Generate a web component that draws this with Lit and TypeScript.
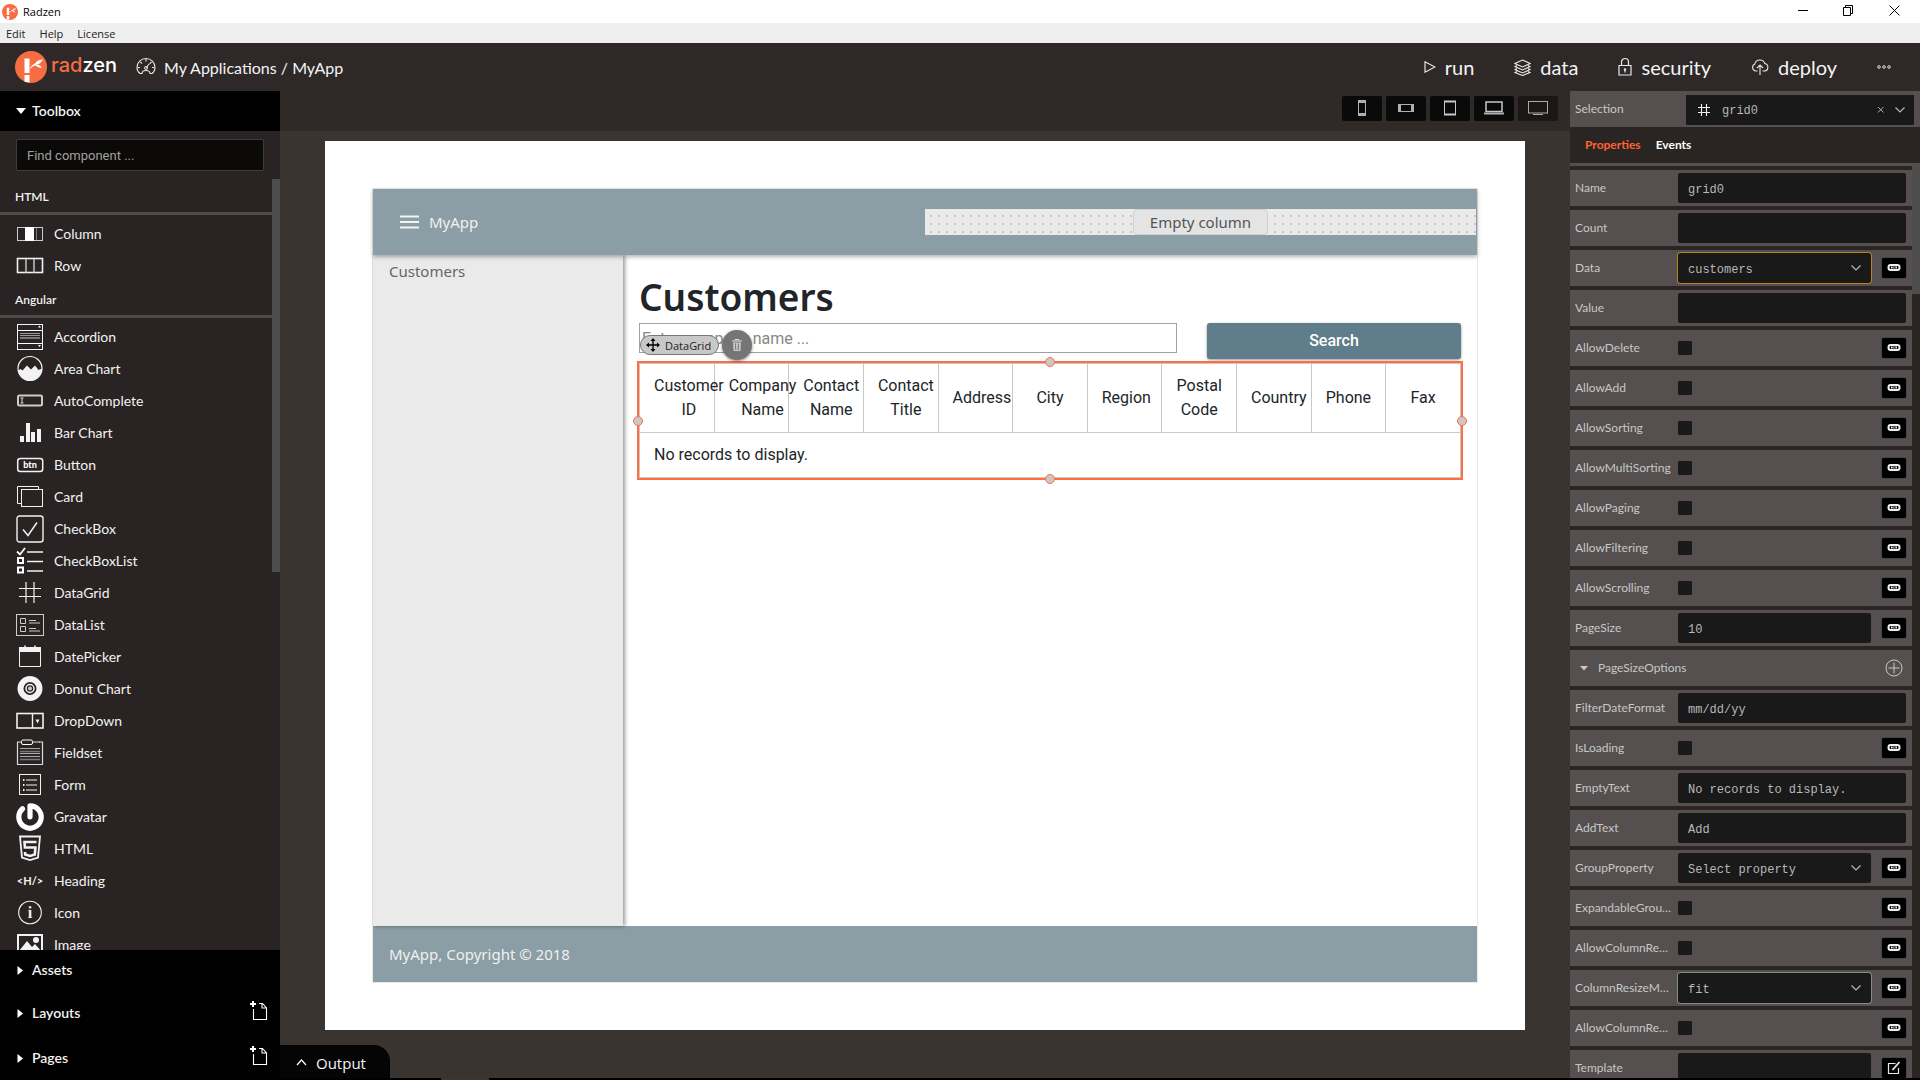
import { LitElement, html, svg, css, nothing } from "lit";
import { customElement, property } from "lit/decorators.js";

const icon = (size: number, body: unknown, cls = "") => html`
  <svg class=${cls} width=${size} height=${size} viewBox="0 0 ${size} ${size}" fill="none" aria-hidden="true">${body}</svg>
`;

const chevronDown = html`
  <svg class="chevron" width="12" height="8" viewBox="0 0 12 8" fill="none" aria-hidden="true">
    <path d="M1.5 1.5 6 6 10.5 1.5" stroke="#b8b8b8" stroke-width="1.2" />
  </svg>
`;

const linkIcon = html`
  <svg width="14" height="10" viewBox="0 0 14 10" fill="none" stroke="#f2f2f2" aria-hidden="true">
    <rect x="1.500" y="2" width="11" height="5" rx="2.200" stroke-width="2" />
    <path d="M4.800 3.500v2M9.200 3.500v2" stroke-width="1.600" />
    <path d="M7 3v3.500" stroke="#bbb" stroke-width="1" />
  </svg>
`;

const W = "#f2f2f2";

const toolIcons: Record<string, unknown> = {
  Column: svg`<rect x="1.5" y="7.5" width="25" height="13" stroke="#ccc"/><rect x="9" y="7" width="9" height="14" fill="#fff"/><path d="M20.5 8v12" stroke="#777"/>`,
  Row: svg`<rect x="1.5" y="6.5" width="25" height="14" stroke=${W} stroke-width="1.6"/><path d="M10 7v14M18 7v14" stroke="#ccc" stroke-width="1.4"/>`,
  Accordion: svg`<rect x="1.5" y="1.5" width="25" height="25" stroke=${W}/><path d="M1 7.5h26M1 20.5h26" stroke="#fff"/><path d="M4 10.5h20M4 12.5h20" stroke="#999"/><path d="M4 15h20" stroke="#777" stroke-width="2"/><path d="M22 4.5h3l-1.5-2zM22 22h3l-1.5 2z" fill="#fff"/>`,
  "Area Chart": svg`<circle cx="14" cy="13.5" r="12" stroke=${W} stroke-width="1.2"/><path d="M2 15.5 4.5 14l2 1.5L11 10.500l4 4L19 10.500l3.500 4.500L26 13.500A12 12 0 0 1 14 25.500 12 12 0 0 1 2 15.500z" fill=${W}/>`,
  AutoComplete: svg`<rect x="2" y="8.500" width="24" height="10" rx="1.500" stroke="#ccc" stroke-width="2"/><path d="M4.500 11h3M4.500 16h3M6 11v5" stroke="#ddd"/>`,
  "Bar Chart": svg`<path d="M4 17h4v6H4zM10 4h4v19h-4zM15 13h4v10h-4zM21 10h4v13h-4z" fill=${W}/>`,
  Button: svg`<rect x="1.700" y="7.500" width="25" height="13" rx="2.500" stroke=${W} stroke-width="1.500"/><text x="14" y="17" text-anchor="middle" font-family="Lato, sans-serif" font-weight="900" font-size="9" fill="#fff">btn</text>`,
  Card: svg`<path d="M5.500 20.500h-4v-17h21v3" stroke=${W}/><rect x="5.500" y="6.500" width="21" height="17" stroke=${W}/>`,
  CheckBox: svg`<rect x="1" y="1" width="26" height="26" rx="2.500" stroke=${W} stroke-width="1.400"/><path d="m7 14.500 5 6 9-13" stroke=${W} stroke-width="1.500"/>`,
  CheckBoxList: svg`<path d="m1 4.500 3 3L9 1" stroke="#fff" stroke-width="1.800"/><rect x="2" y="11" width="5" height="5" stroke="#fff" stroke-width="2"/><rect x="2" y="20.500" width="5" height="5" stroke="#fff" stroke-width="2"/><path d="M11 5h16M11 14.500h16M11 24h16" stroke=${W} stroke-width="1.600"/>`,
  DataGrid: svg`<path d="M10 3v21M18 3v21M3 9.500h22M3 17.500h22" stroke=${W} stroke-width="1.200"/>`,
  DataList: svg`<rect x=".5" y="3.500" width="27" height="21" stroke="#ccc"/><path d="M4.500 7.500h5v5h-5zM4.500 15.500h5v5h-5zM13 9.500h7M13 12h11M13 17.500h7M13 20h11" stroke="#ccc"/>`,
  DatePicker: svg`<path d="M3.500 5h21v18.500h-21z" stroke=${W}/><path d="M3 4h22v5H3z" fill=${W}/><path d="M9 2.500v3M19 2.500v3" stroke=${W} stroke-width="1.500"/>`,
  "Donut Chart": svg`<circle cx="14" cy="13.500" r="9.500" stroke=${W} stroke-width="6"/><circle cx="14" cy="13.500" r="4" stroke=${W} stroke-width="1.500"/><circle cx="14" cy="13.500" r="2" fill="#ccc"/>`,
  DropDown: svg`<rect x="1" y="6.500" width="26" height="14.500" stroke=${W} stroke-width="1.600"/><path d="M16.500 7v14" stroke=${W} stroke-width="1.400"/><path d="M19.500 12.500h4l-2 4z" fill=${W}/>`,
  Fieldset: svg`<path d="M5 3H1.500v22.500h25V3H23" stroke="#ddd" stroke-width="1.200"/><path d="M17 3h7" stroke="#ddd"/><rect x="5.500" y="1" width="11" height="4.500" rx="1.500" stroke="#fff"/><path d="M4 9.500h20M4 14.500h20M4 17.500h20" stroke="#aaa"/><path d="M4 12.500h20M4 20.500h20" stroke="#777" stroke-width="1.600"/>`,
  Form: svg`<rect x="3.500" y="3.500" width="21" height="20" stroke=${W}/><path d="M10 9h11M10 14h11M10 19h11" stroke=${W} stroke-width="1.200"/><path d="M7 9h1.500M7 14h1.500M7 19h1.500" stroke=${W} stroke-width="1.800"/>`,
  Gravatar: svg`<path d="M14 2.800v11M14 2.800A11.200 11.200 0 1 1 6.500 5.700" stroke="#fff" stroke-width="5.200" stroke-linecap="round" stroke-linejoin="round"/>`,
  HTML: svg`<path d="m4 1.500 2 21 8 2.500 8-2.500 2-21z" stroke=${W} stroke-width="1.800"/><path d="M20.500 7H8.500l.4 5.500h10.500l-.6 7-4.800 1.500-4.800-1.500-.2-2.500" stroke=${W} stroke-width="2.600"/>`,
  Heading: svg`<text x="14" y="18" text-anchor="middle" font-family="Lato, sans-serif" font-weight="700" font-size="11" fill=${W}>&lt;H/&gt;</text>`,
  Icon: svg`<circle cx="14" cy="13.500" r="11.300" stroke=${W} stroke-width="1.100"/><text x="14" y="19" text-anchor="middle" font-family="Liberation Serif, serif" font-weight="700" font-size="16" fill=${W}>i</text>`,
  Image: svg`<rect x="2" y="4" width="24" height="20" stroke=${W} stroke-width="2"/><circle cx="20" cy="9" r="3" fill=${W}/><path d="m3 20 8-10 5 6 3-3 7 8v3H3z" fill=${W}/>`,
};

const angularTools = [
  "Accordion", "Area Chart", "AutoComplete", "Bar Chart", "Button", "Card", "CheckBox", "CheckBoxList",
  "DataGrid", "DataList", "DatePicker", "Donut Chart", "DropDown", "Fieldset", "Form", "Gravatar",
  "HTML", "Heading", "Icon", "Image",
];

@customElement("toolbox-panel")
export class ToolboxPanel extends LitElement {
  static styles = css`
    :host { display: flex; flex-direction: column; min-height: 0; background: #292323; color: #f2f2f2; font-family: Lato, sans-serif; }
    * { box-sizing: border-box; }
    button { font: inherit; color: inherit; background: none; border: 0; padding: 0; text-align: left; cursor: pointer; }
    .head { display: flex; align-items: center; flex: none; height: 40px; padding: 0 16px; background: #000; font-size: 14px; font-weight: 600; }
    .head.tall { height: 45px; padding-right: 10px; }
    .fold { display: flex; align-items: center; gap: 6px; flex: 1; }
    .fold span, .tool span { padding-bottom: 2px; }
    .tall .fold span { padding-bottom: 0; }
    .search { flex: none; padding: 8px 16px; }
    .search input { display: block; width: 100%; height: 32px; padding: 0 10px; background: #0b0a09; border: 1px solid #3d3b3b; border-radius: 2px; color: #ddd; font-family: Roboto, sans-serif; font-size: 13px; }
    .search input::placeholder { color: #a0a0a0; }
    .scroll { display: flex; flex: 1; min-height: 0; }
    .list { flex: 1; overflow: hidden; }
    .track { flex: none; width: 8px; }
    .thumb { height: 51%; background: #4d4d4d; }
    .group { height: 36px; margin: 0 0 3px; padding: 0 15px; border-bottom: 3px solid #4f4b4a; font-size: 12px; font-weight: 600; line-height: 36px; }
    .tool { display: flex; align-items: center; gap: 10px; width: 100%; height: 32px; padding: 0 16px; font-size: 14px; }
  `;

  private tool(name: string) {
    return html`<button class="tool">${icon(28, toolIcons[name])}<span>${name}</span></button>`;
  }

  private section(name: string, tall: boolean) {
    return html`
      <div class="head ${tall ? "tall" : ""}">
        <button class="fold">
          ${icon(10, svg`<path d="M1.500 1v9l5.500-4.500z" fill="#fff"/>`)}<span>${name}</span>
        </button>
        ${tall
          ? html`<button aria-label="Add to ${name}">${icon(20, svg`
              <path d="M0 3h6M3 0v6" stroke="#fff" stroke-width="2"/>
              <path d="M3.500 8v10.500h13V7l-4-4.500H9M12 2.500V7h4.500" stroke="#fff" stroke-width="1.100"/>`)}</button>`
          : nothing}
      </div>
    `;
  }

  render() {
    return html`
      <div class="head">
        <button class="fold">${icon(10, svg`<path d="M0 2h10L5 8z" fill="#fff"/>`)}<span>Toolbox</span></button>
      </div>
      <div class="search"><input type="text" placeholder="Find component ..." aria-label="Find component" /></div>
      <div class="scroll">
        <div class="list">
          <h3 class="group">HTML</h3>
          ${this.tool("Column")}${this.tool("Row")}
          <h3 class="group">Angular</h3>
          ${angularTools.map((t) => this.tool(t))}
        </div>
        <div class="track"><div class="thumb"></div></div>
      </div>
      ${this.section("Assets", false)}${this.section("Layouts", true)}${this.section("Pages", true)}
    `;
  }
}

const columns = [
  "Customer ID", "Company Name", "Contact Name", "Contact Title", "Address", "City",
  "Region", "Postal Code", "Country", "Phone", "Fax",
];

@customElement("design-canvas")
export class DesignCanvas extends LitElement {
  static styles = css`
    :host { display: flex; flex-direction: column; min-width: 0; background: #3a3431; }
    * { box-sizing: border-box; }
    button { font: inherit; color: inherit; border: 0; padding: 0; cursor: pointer; }
    .devices { display: flex; justify-content: flex-end; align-items: center; gap: 4px; flex: none; height: 40px; padding: 0 12px 6px; background: #2f2a27; }
    .device { display: flex; align-items: center; justify-content: center; width: 40px; height: 25px; background: #0b0a0a; border-radius: 2px; }
    .device.on { background: #1b1716; }
    .page { flex: 1; display: flex; min-height: 0; margin: 10px 45px 15px; padding: 47px 47px; background: #fff; }
    .frame { flex: 1; display: flex; flex-direction: column; min-width: 0; border: 1px solid #e9e9e9; font-family: "Noto Sans", sans-serif; font-size: 15px; }
    .top { z-index: 1; display: flex; align-items: center; flex: none; height: 66px; background: #8b9da5; color: #f0f0f0; box-shadow: 0 2px 4px rgba(0, 0, 0, 0.3); }
    .brand { display: flex; align-items: center; gap: 10px; flex: 1; padding: 0 27px; background: none; text-align: left; }
    .empty { display: flex; justify-content: center; flex: 0 0 50%; height: 26px; border-right: 1px solid #8b9da5; background: radial-gradient(circle, #c8c8c8 1px, transparent 1px) 2px 3px / 8px 8px #eaeaea; color: #555; }
    .empty span { width: 135px; background: #e4e4e4; border: 1px solid #d0d0d0; border-radius: 4px; line-height: 24px; text-align: center; }
    .middle { flex: 1; display: flex; min-height: 0; }
    .side { z-index: 0; width: 250px; flex: none; padding: 6px 16px; background: #eaeaea; box-shadow: 2px 0 4px rgba(0, 0, 0, 0.4); line-height: 20px; }
    .side a { color: #666; text-decoration: none; }
    .main { flex: 1; min-width: 0; padding: 16px 16px 0; font-family: Roboto, sans-serif; }
    h1 { margin: 0; color: #212529; font-family: "Noto Sans", sans-serif; font-size: 37px; font-weight: 600; line-height: 52px; }
    .row { display: flex; align-items: flex-start; gap: 30px; }
    .row input { flex: 1; min-width: 0; height: 30px; padding: 0 2px; border: 1px solid #a0a0a0; color: #333; font-family: Roboto, sans-serif; font-size: 16px; }
    .row input::placeholder { color: #888; opacity: 1; }
    .search { width: 254px; height: 36px; padding-bottom: 2px; background: #607d8b; border-radius: 3px; box-shadow: 0 1px 3px rgba(0, 0, 0, 0.4); color: #fff; font-family: Roboto, sans-serif; font-size: 16px; font-weight: 500; }
    .picked { position: relative; margin: 2px -2px 0 -2px; border: 2px solid #ff6d41; }
    table { width: 100%; table-layout: fixed; border-collapse: collapse; color: #212529; font-size: 16px; line-height: 24px; }
    th, td { border: 1px solid #c8c8c8; }
    th { height: 69px; padding: 0 14px; font-weight: 400; text-align: center; white-space: normal; }
    th span { display: inline-block; vertical-align: middle; }
    td { height: 45px; padding: 0 14px; }
    .handle { position: absolute; width: 10px; height: 10px; background: #c8c8c8; border: 1px solid #ff6d41; border-radius: 50%; }
    .north { left: calc(50% - 5px); top: -6px; }
    .south { left: calc(50% - 5px); bottom: -6px; }
    .west { left: -6px; top: calc(50% - 5px); }
    .east { right: -6px; top: calc(50% - 5px); }
    .tags { position: absolute; left: 1px; bottom: 100%; display: flex; align-items: center; gap: 3px; margin-bottom: 3px; }
    .tag { display: flex; align-items: center; gap: 5px; height: 20px; padding: 0 7px 0 5px; background: #c8c8c8; border: 1px solid #777; border-radius: 10px; color: #222; font-family: "Open Sans", sans-serif; font-size: 11px; }
    .trash { display: flex; align-items: center; justify-content: center; width: 30px; height: 30px; background: #757575; border-radius: 50%; box-shadow: 0 1px 3px rgba(0, 0, 0, 0.5); }
    .bottom { flex: none; height: 56px; padding: 0 16px; background: #8b9da5; color: #f0f0f0; line-height: 56px; }
    .foot { display: flex; flex: none; height: 35px; background: linear-gradient(90deg, #000 161px, #3a3638 161px 209px, #000 209px) bottom / 100% 2px no-repeat; }
    .output { display: flex; align-items: center; gap: 9px; height: 33px; padding: 2px 24px 0 16px; background: #050505; border-radius: 0 16px 0 0; color: #f5f5f5; font-family: "Open Sans", sans-serif; font-size: 15px; }
  `;

  private device(label: string, body: unknown, on = false) {
    return html`<button class="device ${on ? "on" : ""}" aria-label=${label}>${icon(24, body)}</button>`;
  }

  render() {
    return html`
      <div class="devices">
        ${this.device("Phone", svg`<rect x="8.500" y="4.500" width="7" height="15" stroke="#b0b0b0"/><path d="M8 6h8M8 18h8" stroke="#b0b0b0" stroke-width="2"/>`)}
        ${this.device("Phone landscape", svg`<rect x="4.500" y="8.500" width="15" height="7" stroke="#b0b0b0"/><path d="M6 8v8M18 8v8" stroke="#b0b0b0" stroke-width="2"/>`)}
        ${this.device("Tablet", svg`<rect x="6.500" y="5.500" width="11" height="13" stroke="#c8c8c8"/><path d="M6 5.500h12M6 18.500h12" stroke="#c8c8c8" stroke-width="2"/>`)}
        ${this.device("Laptop", svg`<rect x="4" y="6" width="16" height="9.500" stroke="#c8c8c8" stroke-width="1.500"/><path d="M2 17.500h20" stroke="#b0b0b0" stroke-width="2"/>`)}
        ${this.device("Desktop", svg`<rect x="2.500" y="5.500" width="19" height="11.500" stroke="#aaa"/><path d="M7 18.500h10" stroke="#aaa"/>`, true)}
      </div>
      <div class="page">
        <div class="frame">
          <div class="top">
            <button class="brand">
              ${icon(19, svg`<path d="M0 3.500h19M0 9h19M0 14.500h19" stroke="#f4f4f4" stroke-width="2"/>`)}MyApp
            </button>
            <div class="empty"><span>Empty column</span></div>
          </div>
          <div class="middle">
            <div class="side"><a href="#customers">Customers</a></div>
            <div class="main">
              <h1>Customers</h1>
              <div class="row">
                <input type="text" placeholder="Enter company name ..." aria-label="Company name" />
                <button class="search">Search</button>
              </div>
              <div class="picked">
                <table>
                  <thead><tr>${columns.map((c) => html`<th><span>${c}</span></th>`)}</tr></thead>
                  <tbody><tr><td colspan=${columns.length}>No records to display.</td></tr></tbody>
                </table>
                <div class="tags">
                  <div class="tag">
                    ${icon(14, svg`<path d="M7 1v12M1 7h12" stroke="#000" stroke-width="1.300"/><path d="M7 0l2.500 3h-5zM7 14l2.500-3h-5zM0 7l3-2.500v5zM14 7l-3-2.500v5z" fill="#000"/>`)}DataGrid
                  </div>
                  <button class="trash" aria-label="Delete">
                    ${icon(14, svg`<path d="M2 3h10M5 2.500v-1h4v1" stroke="#ddd"/><path d="M3 4.500h8l-.6 8.500H3.600z" fill="#c8c8c8"/><path d="M5.500 5.500l.3 6.500M8.500 5.500l-.3 6.500" stroke="#757575"/>`)}
                  </button>
                </div>
                <i class="handle north"></i><i class="handle south"></i><i class="handle west"></i><i class="handle east"></i>
              </div>
            </div>
          </div>
          <div class="bottom">MyApp, Copyright © 2018</div>
        </div>
      </div>
      <div class="foot">
        <button class="output">${icon(11, svg`<path d="M1 8 5.500 3 10 8" stroke="#fff" stroke-width="1.200"/>`)}Output</button>
      </div>
    `;
  }
}

type Field = { name: string; kind: "text" | "select" | "check" | "group"; value?: string; tail?: "link" | "edit"; ring?: "gold" | "grey" };

const fields: Field[] = [
  { name: "Name", kind: "text", value: "grid0" },
  { name: "Count", kind: "text" },
  { name: "Data", kind: "select", value: "customers", tail: "link", ring: "gold" },
  { name: "Value", kind: "text" },
  ...["AllowDelete", "AllowAdd", "AllowSorting", "AllowMultiSorting", "AllowPaging", "AllowFiltering", "AllowScrolling"].map(
    (name): Field => ({ name, kind: "check", tail: "link" }),
  ),
  { name: "PageSize", kind: "text", value: "10", tail: "link" },
  { name: "PageSizeOptions", kind: "group" },
  { name: "FilterDateFormat", kind: "text", value: "mm/dd/yy" },
  { name: "IsLoading", kind: "check", tail: "link" },
  { name: "EmptyText", kind: "text", value: "No records to display." },
  { name: "AddText", kind: "text", value: "Add" },
  { name: "GroupProperty", kind: "select", value: "Select property", tail: "link" },
  { name: "ExpandableGroups", kind: "check", tail: "link" },
  { name: "AllowColumnResize", kind: "check", tail: "link" },
  { name: "ColumnResizeMode", kind: "select", value: "fit", tail: "link", ring: "grey" },
  { name: "AllowColumnReorder", kind: "check", tail: "link" },
  { name: "Template", kind: "text", tail: "edit" },
];

@customElement("property-row")
export class PropertyRow extends LitElement {
  @property({ attribute: false }) field!: Field;

  static styles = css`
    :host { display: flex; align-items: center; flex: none; height: 36px; padding: 0 6px 0 5px; background: #55504f; color: #c8c7c7; font-family: Lato, sans-serif; font-size: 12px; }
    * { box-sizing: border-box; }
    button { font: inherit; color: inherit; background: none; border: 0; padding: 0; cursor: pointer; }
    label { flex: none; width: 97px; margin-right: 6px; padding-bottom: 2px; overflow: hidden; text-overflow: ellipsis; white-space: nowrap; }
    .value { flex: 1; min-width: 0; display: grid; align-items: center; }
    .text, .drop { grid-area: 1 / 1; width: 100%; height: 30px; padding: 4px 10px 0; appearance: none; background: #191919; border: 0; border-radius: 2px; outline-offset: 0; color: #b8b8b8; font-family: "Liberation Mono", monospace; font-size: 12px; }
    .gold { outline: 1px solid #b5841f; }
    .grey { outline: 1px solid #888; }
    .chevron { grid-area: 1 / 1; justify-self: end; margin-right: 9px; pointer-events: none; }
    .check { width: 14px; height: 14px; margin: 0; appearance: none; background: #191919; border-radius: 1px; }
    .tail { display: flex; align-items: center; justify-content: center; flex: none; width: 24px; height: 20px; margin-left: 11px; background: #000; outline: 1px solid #44474b; border-radius: 1px; }
    .fold { display: flex; align-items: center; gap: 8px; flex: 1; padding-left: 3px; }
    .fold span { padding-bottom: 2px; }
    .add { display: flex; margin-right: 3px; }
  `;

  private control(f: Field) {
    if (f.kind === "check") return html`<input id="value" class="check" type="checkbox" />`;
    if (f.kind === "select")
      return html`<select id="value" class="drop ${f.ring ?? ""}"><option>${f.value}</option></select>${chevronDown}`;
    return html`<input id="value" class="text" type="text" .value=${f.value ?? ""} />`;
  }

  render() {
    const f = this.field;
    if (f.kind === "group")
      return html`
        <button class="fold">${icon(12, svg`<path d="M2 4h8L6 8.500z" fill="#c8c8c8"/>`)}<span>${f.name}</span></button>
        <button class="add" aria-label="Add option">${icon(18, svg`<circle cx="9" cy="9" r="8" stroke="#c8c8c8"/><path d="M9 3.500v11M3.500 9h11" stroke="#c8c8c8"/>`)}</button>
      `;
    return html`
      <label for="value">${f.name}</label>
      <div class="value">${this.control(f)}</div>
      ${f.tail === "link" ? html`<button class="tail" aria-label="Bind ${f.name}">${linkIcon}</button>` : nothing}
      ${f.tail === "edit"
        ? html`<button class="tail" aria-label="Edit ${f.name}">${icon(14, svg`<path d="M8.500 2.500h-7v10h10V7" stroke="#e8e8e8" stroke-width="1.200"/><path d="M5.500 9 12.500 1" stroke="#e8e8e8" stroke-width="1.800"/>`)}</button>`
        : nothing}
    `;
  }
}

@customElement("property-panel")
export class PropertyPanel extends LitElement {
  static styles = css`
    :host { display: flex; flex-direction: column; min-height: 0; background: #2a2523; border-bottom: 2px solid #000; color: #c8c7c7; font-family: Lato, sans-serif; font-size: 12px; }
    * { box-sizing: border-box; }
    button { font: inherit; color: inherit; background: none; border: 0; padding: 0; cursor: pointer; }
    .selection { display: flex; align-items: center; flex: none; height: 36px; padding: 2px 6px 0 5px; background: #55504f; }
    .selection label { width: 111px; padding-bottom: 4px; }
    .picker { display: flex; align-items: center; flex: 1; height: 30px; padding: 0 8px 0 10px; background: #191919; }
    .picker select { flex: 1; min-width: 0; height: 30px; padding: 2px 0 0; margin-left: 10px; appearance: none; background: none; border: 0; color: #b8b8b8; font-family: "Liberation Mono", monospace; font-size: 12px; }
    .clear { display: flex; margin-right: 9px; }
    .tabs { display: flex; align-items: center; gap: 15px; flex: none; height: 39px; padding: 0 15px 2px; border-bottom: 3px solid #55504f; color: #fff; font-weight: 700; }
    .tabs .on { color: #ff6037; }
    .scroll { display: flex; flex: 1; min-height: 0; }
    .rows { flex: 1; display: flex; flex-direction: column; gap: 4px; padding-top: 4px; overflow: hidden; min-width: 0; }
    .track { flex: none; width: 8px; }
    .thumb { height: 14%; background: #4d4d4d; }
  `;

  render() {
    return html`
      <div class="selection">
        <label for="selection">Selection</label>
        <div class="picker">
          ${icon(16, svg`<path d="M5.500 2v12M10.500 2v12M2 5.500h12M2 10.500h12" stroke="#f0f0f0" stroke-width="1.100"/>`)}
          <select id="selection"><option>grid0</option></select>
          <button class="clear" aria-label="Clear">${icon(8, svg`<path d="m1 1 5.500 5.500M6.500 1 1 6.500" stroke="#b0b0b0"/>`)}</button>
          ${chevronDown}
        </div>
      </div>
      <div class="tabs"><button class="on">Properties</button><button>Events</button></div>
      <div class="scroll">
        <div class="rows">${fields.map((f) => html`<property-row .field=${f}></property-row>`)}</div>
        <div class="track"><div class="thumb"></div></div>
      </div>
    `;
  }
}

const logo = (size: number) => html`
  <svg width=${size} height=${size} viewBox="0 0 32 32" aria-hidden="true">
    <circle cx="16" cy="16" r="16" fill="#f76d43" />
    <path d="M9.500 7.500h5V22h-5zM9.500 24h5v7.500l-5-.8z" fill="#fff" />
    <path d="M14.500 18.500c1-3 3-5 5.500-6 1.500-2.500 4.500-4 8-4-1.500 3-4 5-7 5 2.500.2 4.500 1 6 3-2.500.5-5-.3-6.500-2.300-2.500.8-4.500 2.300-6 4.300z" fill="#fff" />
  </svg>
`;

@customElement("app-root")
export class AppRoot extends LitElement {
  static styles = css`
    :host { display: flex; flex-direction: column; height: 100vh; overflow: hidden; font-family: Lato, sans-serif; }
    * { box-sizing: border-box; }
    button { font: inherit; color: inherit; background: none; border: 0; padding: 0; cursor: pointer; }
    .title { display: flex; align-items: center; gap: 5px; flex: none; height: 23px; padding: 0 20px 0 2px; background: #fff; color: #000; font-family: "Open Sans", sans-serif; font-size: 11px; }
    .title span { flex: 1; }
    .window { display: flex; gap: 35px; padding-bottom: 3px; }
    .window button, .nav button, .crumbs a { display: flex; align-items: center; }
    .menu { display: flex; gap: 14px; flex: none; height: 20px; padding: 0 6px; background: #efefef; color: #222; font-family: "Open Sans", sans-serif; font-size: 11px; }
    .bar { display: flex; align-items: center; flex: none; height: 48px; padding: 0 29px 0 15px; background: #2e2828; color: #f4f4f4; }
    .wordmark { margin: 0 19px 5px 4px; color: #fff; font-family: Inter, sans-serif; font-size: 20px; font-weight: 500; }
    .wordmark b { color: #f76d43; font-weight: 500; }
    .crumbs { flex: 1; }
    .crumbs a { gap: 8px; color: inherit; font-size: 16px; text-decoration: none; }
    .nav { display: flex; gap: 40px; font-size: 20px; }
    .nav button { gap: 9px; }
    .body { flex: 1; min-height: 0; display: grid; grid-template-columns: 280px minmax(0, 1fr) 350px; }
  `;

  render() {
    return html`
      <div class="title">
        ${logo(16)}<span>Radzen</span>
        <div class="window">
          <button aria-label="Minimize">${icon(11, svg`<path d="M1 5.500h10" stroke="#000"/>`)}</button>
          <button aria-label="Restore">${icon(11, svg`<path d="M.5 2.500h7v8h-7zM2.500 2.500v-2h7v8h-2" stroke="#000"/>`)}</button>
          <button aria-label="Close">${icon(11, svg`<path d="m.5.5 10 10M10.500.5l-10 10" stroke="#000"/>`)}</button>
        </div>
      </div>
      <div class="menu"><button>Edit</button><button>Help</button><button>License</button></div>
      <div class="bar">
        ${logo(32)}
        <div class="wordmark"><b>rad</b>zen</div>
        <div class="crumbs">
          <a href="#applications">
            ${icon(20, svg`<path d="M4 16.500C2 15 1 12.800 1 10.500a9 9 0 0 1 18 0c0 2.300-1 4.500-3 6h-2c0-2-1.500-3-4-3s-4 1-4 3z" stroke="#e8e8e8" stroke-width="1.100"/><path d="M10 2v2.500M4.500 5 6 6.500M15.500 5 14 6.500M2 10.500h2M16 10.500h2M10 11l3.500-4.500" stroke="#e8e8e8" stroke-width="1.100"/><circle cx="10" cy="11" r="1.500" stroke="#e8e8e8"/>`)}
            My Applications / MyApp
          </a>
        </div>
        <div class="nav">
          <button>${icon(12, svg`<path d="M1 .8v10.400L11 6z" stroke="#f0f0f0" stroke-width="1.100"/>`)}run</button>
          <button>${icon(17, svg`<path d="m8.500 1 7.500 3.500-7.500 3.500L1 4.500zM3 6.500 1 7.500 8.500 11 16 7.500l-2-1M3 9.500l-2 1L8.500 14l7.500-3.500-2-1M3 12.500l-2 1 7.500 3 7.500-3-2-1" stroke="#e8e8e8" stroke-width="1.100"/>`)}data</button>
          <button><svg width="14" height="21" viewBox="0 0 14 21" fill="none" aria-hidden="true"><path d="M1 8.500h12v9.500H1zM3.500 8.500V5a3.500 3.500 0 0 1 7 0v3.500M7 12v3.500" stroke="#e8e8e8" stroke-width="1.200"/><circle cx="7" cy="12.500" r="1.200" fill="#e8e8e8"/></svg>security</button>
          <button>${icon(18, svg`<path d="M6.500 13H4.500A3.700 3.700 0 0 1 3.800 6a5.200 5.200 0 0 1 10-.5A3.800 3.800 0 0 1 13.500 13h-2M9 17V7M6 10l3-3 3 3" stroke="#e8e8e8" stroke-width="1.100"/>`)}deploy</button>
          <button aria-label="More">${icon(14, svg`<circle cx="2" cy="7" r="1.300" stroke="#ddd"/><circle cx="7" cy="7" r="1.300" stroke="#ddd"/><circle cx="12" cy="7" r="1.300" stroke="#ddd"/>`)}</button>
        </div>
      </div>
      <div class="body">
        <toolbox-panel></toolbox-panel>
        <design-canvas></design-canvas>
        <property-panel></property-panel>
      </div>
    `;
  }
}
